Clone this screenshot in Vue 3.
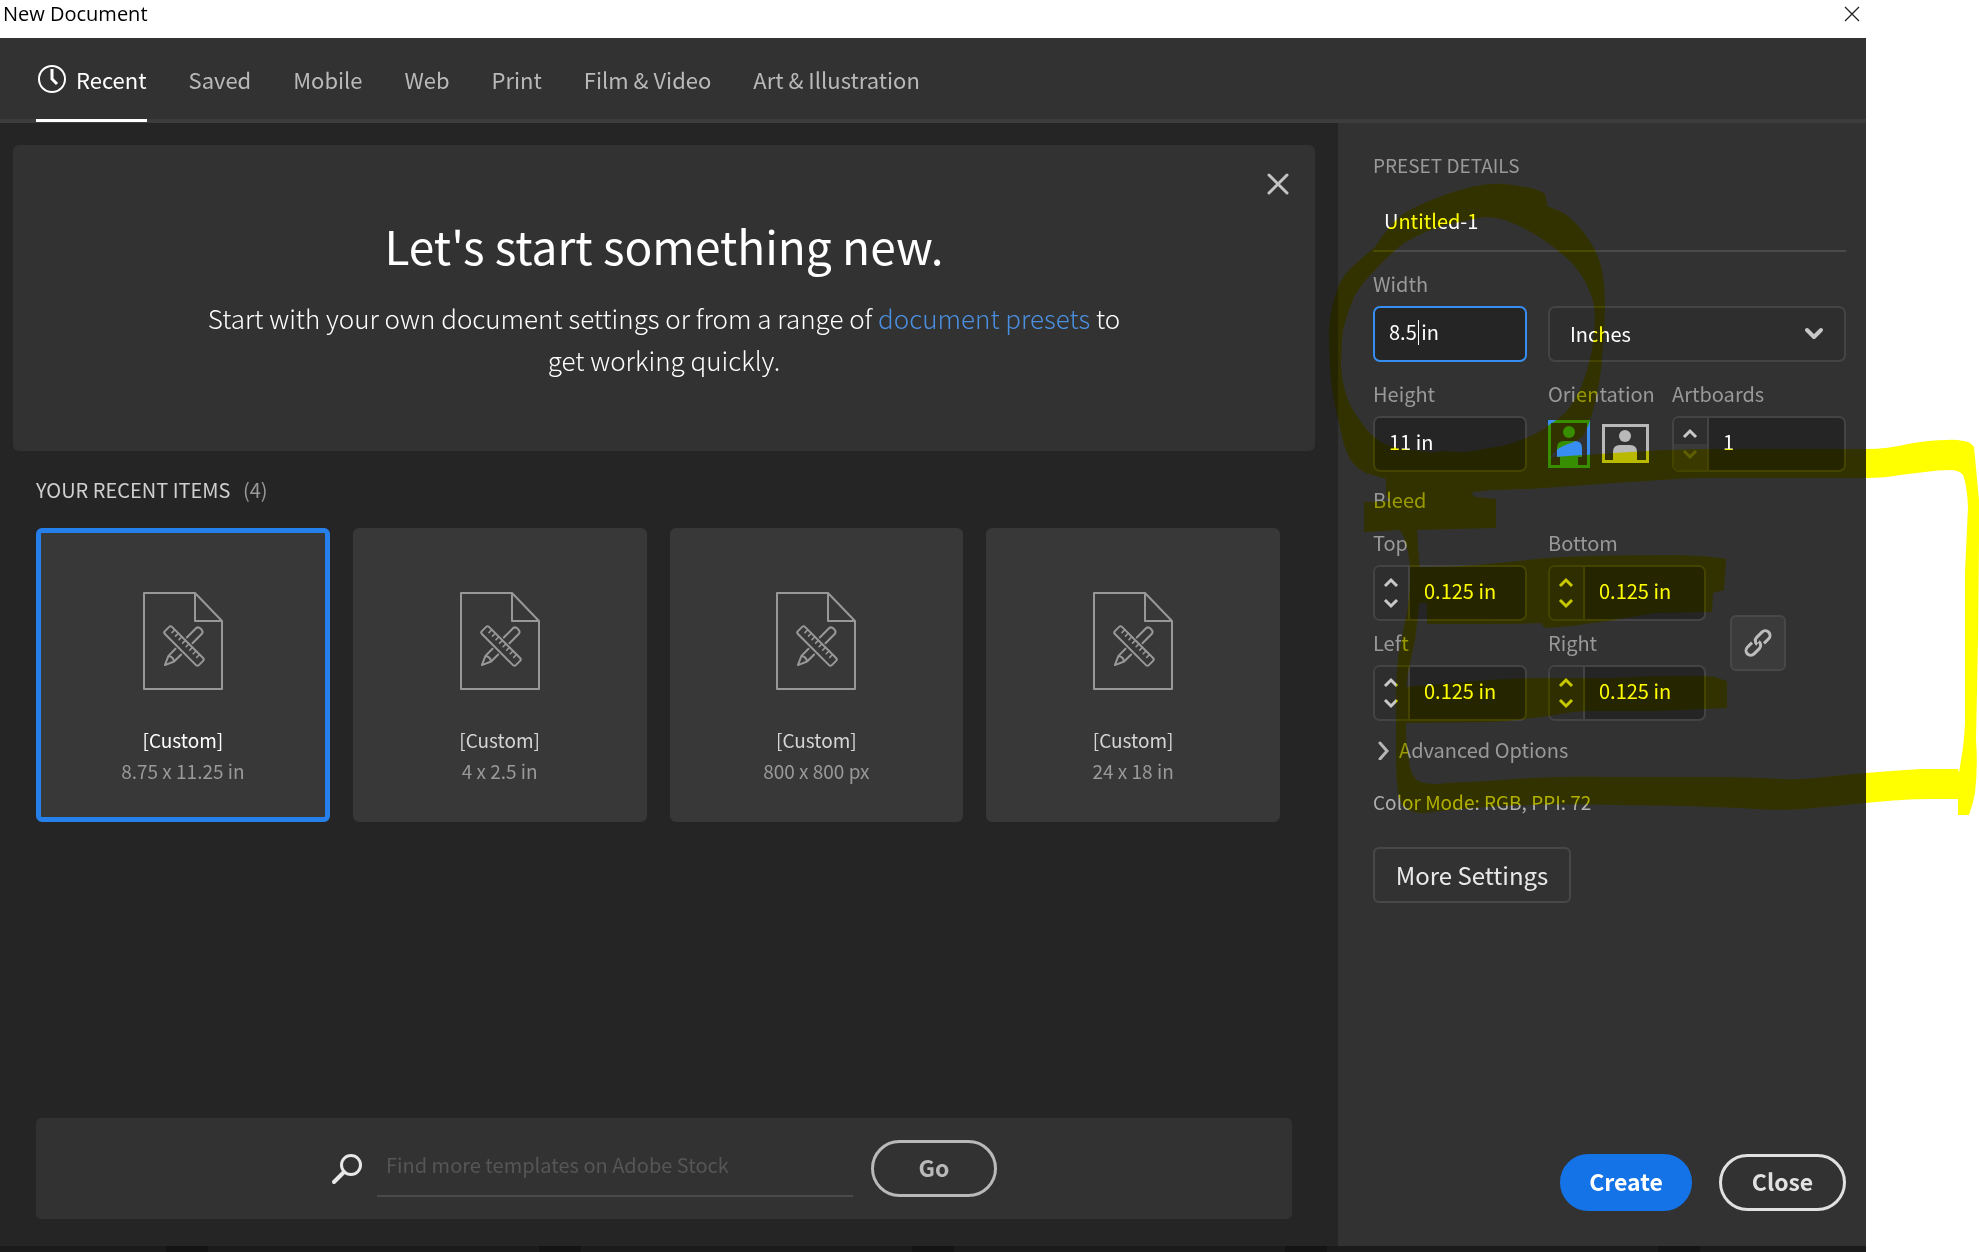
<script setup>
import { ref } from 'vue'

const tabs = ['Recent', 'Saved', 'Mobile', 'Web', 'Print', 'Film & Video', 'Art & Illustration']
const activeTab = ref('Recent')

const recents = [
  { id: 1, name: '[Custom]', size: '8.75 x 11.25 in' },
  { id: 2, name: '[Custom]', size: '4 x 2.5 in' },
  { id: 3, name: '[Custom]', size: '800 x 800 px' },
  { id: 4, name: '[Custom]', size: '24 x 18 in' }
]
const selected = ref(1)

const docName = ref('Untitled-1')
const width = ref('8.5 in')
const height = ref('11 in')
const units = ref('Inches')
const artboards = ref('1')
const bleed = ref([
  { key: 'top', label: 'Top', value: '0.125 in' },
  { key: 'bottom', label: 'Bottom', value: '0.125 in' },
  { key: 'left', label: 'Left', value: '0.125 in' },
  { key: 'right', label: 'Right', value: '0.125 in' }
])
</script>

<template>
  <div class="page">
    <header class="titlebar">
      <span>New Document</span>
      <button class="plain" aria-label="Close window">
        <svg width="16" height="16" viewBox="0 0 16 16"><path d="M1 1l14 14M15 1L1 15" stroke="#222" stroke-width="1.3" /></svg>
      </button>
    </header>

    <nav class="tabs">
      <button v-for="t in tabs" :key="t" class="tab" :class="{ active: t === activeTab }" @click="activeTab = t">
        <svg v-if="t === 'Recent'" width="30" height="30" viewBox="0 0 30 30" fill="none" stroke="#fff">
          <circle cx="16" cy="15" r="13" stroke-width="2" />
          <path d="M16 5v10l5 5" stroke-width="3" />
        </svg>
        {{ t }}
      </button>
    </nav>

    <div class="body">
      <main class="main">
        <section class="banner">
          <button class="plain dismiss" aria-label="Dismiss">
            <svg width="22" height="22" viewBox="0 0 22 22"><path d="M2 2l18 18M20 2L2 20" stroke="#c4c4c4" stroke-width="3" stroke-linecap="round" /></svg>
          </button>
          <h1>Let's start something new.</h1>
          <p>Start with your own document settings or from a range of <a href="#">document presets</a> to get working quickly.</p>
        </section>

        <section class="recents">
          <h2>YOUR RECENT ITEMS <span>(4)</span></h2>
          <div class="grid">
            <button v-for="r in recents" :key="r.id" class="card" :class="{ selected: r.id === selected }" @click="selected = r.id">
              <svg class="doc" width="82" height="100" viewBox="0 0 82 100" fill="none" stroke="#989898" stroke-width="2" stroke-linejoin="round" stroke-linecap="round">
                <path d="M2 2h51l27 28v68H2zM53 2v28h27" />
                <g transform="translate(42 55) rotate(-45)">
                  <rect x="-5" y="-24" width="10" height="48" rx="2" />
                  <path d="M5 -18h-4M5 -13h-4M5 -8h-4M5 -3h-4M5 2h-4M5 7h-4M5 12h-4M5 17h-4" stroke-width="1.6" />
                </g>
                <g transform="translate(42 55) rotate(45)">
                  <path d="M-4 -8v-13q0-3 4-3t4 3v13M-4 8v10l4 9 4-9V8M-4 18q4-3 8 0" />
                </g>
              </svg>
              <span class="card-name">{{ r.name }}</span>
              <span class="card-size">{{ r.size }}</span>
            </button>
          </div>
        </section>

        <form class="search" @submit.prevent>
          <svg width="32" height="32" viewBox="0 0 32 32" fill="none" stroke="#e8e8e8" stroke-linecap="round">
            <circle cx="20" cy="12" r="9.5" stroke-width="3" />
            <path d="M13 19L3 29" stroke-width="4" />
          </svg>
          <input type="text" aria-label="Find templates" placeholder="Find more templates on Adobe Stock" />
          <button class="pill go">Go</button>
        </form>
      </main>

      <aside class="panel">
        <h3>PRESET DETAILS</h3>
        <input v-model="docName" class="name" type="text" aria-label="Document name" />

        <div class="row first">
          <div class="field col-a">
            <label for="w">Width</label>
            <div class="box focused">
              <input id="w" v-model="width" type="text" />
              <i class="caret"></i>
            </div>
          </div>
          <div class="field grow">
            <label for="u" class="ghost">Units</label>
            <div class="box select">
              <select id="u" v-model="units">
                <option>Inches</option>
                <option>Pixels</option>
                <option>Points</option>
              </select>
              <svg width="20" height="14" viewBox="0 0 20 14" fill="none"><path d="M3 3l7 7 7-7" stroke="#c8c8c8" stroke-width="4" stroke-linecap="round" stroke-linejoin="round" /></svg>
            </div>
          </div>
        </div>

        <div class="row">
          <div class="field col-a">
            <label for="h">Height</label>
            <div class="box"><input id="h" v-model="height" type="text" /></div>
          </div>
          <div class="field col-o">
            <span class="label">Orientation</span>
            <div class="orient">
              <button class="plain" aria-label="Portrait">
                <svg width="42" height="48" viewBox="0 0 42 48">
                  <rect x="1.5" y="1.5" width="39" height="45" fill="none" stroke="#378ef0" stroke-width="3" />
                  <circle cx="21" cy="12" r="6" fill="#378ef0" />
                  <path d="M9 37V28q0-7 7-7h11q7 0 7 7v9h-4v9H12v-9z" fill="#378ef0" />
                </svg>
              </button>
              <button class="plain" aria-label="Landscape">
                <svg width="48" height="40" viewBox="0 0 48 40">
                  <rect x="1.5" y="1.5" width="44" height="36" fill="none" stroke="#b9b9b9" stroke-width="3" />
                  <circle cx="23" cy="12" r="6" fill="#b9b9b9" />
                  <path d="M11 38V28q0-7 7-7h10q7 0 7 7v10z" fill="#b9b9b9" />
                </svg>
              </button>
            </div>
          </div>
          <div class="field grow">
            <label for="ab">Artboards</label>
            <div class="box stepper">
              <div class="arrows">
                <button aria-label="More artboards"><svg width="16" height="11" viewBox="0 0 16 11"><path d="M2 9l6-6 6 6" /></svg></button>
                <button class="off" disabled aria-label="Fewer artboards"><svg width="16" height="11" viewBox="0 0 16 11"><path d="M2 2l6 6 6-6" /></svg></button>
              </div>
              <input id="ab" v-model="artboards" type="text" />
            </div>
          </div>
        </div>

        <span class="label bleed-title">Bleed</span>
        <div class="bleed">
          <div class="bleed-grid">
            <div v-for="b in bleed" :key="b.key" class="field">
              <label :for="b.key">{{ b.label }}</label>
              <div class="box stepper">
                <div class="arrows">
                  <button :aria-label="'Increase ' + b.label"><svg width="16" height="11" viewBox="0 0 16 11"><path d="M2 9l6-6 6 6" /></svg></button>
                  <button :aria-label="'Decrease ' + b.label"><svg width="16" height="11" viewBox="0 0 16 11"><path d="M2 2l6 6 6-6" /></svg></button>
                </div>
                <input :id="b.key" v-model="b.value" type="text" />
              </div>
            </div>
          </div>
          <button class="link" aria-label="Link bleed values">
            <svg width="32" height="32" viewBox="0 0 32 32" fill="none" stroke="#bdbdbd" stroke-width="3" stroke-linecap="butt">
              <g transform="translate(16 16) rotate(-45)">
                <path d="M-4 -4.500h-6.500a4.700 4.700 0 0 0 0 9.400h7.500a4.700 4.700 0 0 0 4.600 -5.500" />
                <path d="M4 4.500h6.500a4.700 4.700 0 0 0 0 -9.400h-7.500a4.700 4.700 0 0 0 -4.600 5.500" />
              </g>
            </svg>
          </button>
        </div>

        <button class="plain advanced">
          <svg width="12" height="20" viewBox="0 0 12 20" fill="none"><path d="M3 3l7 8-7 8" stroke="#b5b5b5" stroke-width="3" stroke-linecap="round" /></svg>
          Advanced Options
        </button>
        <p class="mode">Color Mode: RGB, PPI: 72</p>
        <button class="more">More Settings</button>

        <div class="actions">
          <button class="pill create">Create</button>
          <button class="pill close">Close</button>
        </div>
      </aside>
    </div>

    <footer class="edge"><i></i><i></i><i></i><i></i><i></i></footer>

    <!-- Yellow marker strokes drawn over the preset details -->
    <svg class="marker" width="659" height="840" viewBox="1320 0 659 840" fill="#ff0" aria-hidden="true">
      <path fill-rule="evenodd" d="M1547 202L1545 194Q1538 188 1505 184Q1488 183 1471 187Q1438 195 1404 213Q1388 226 1375 247Q1355 264 1349 270Q1340 280 1337 290Q1330 310 1329 330Q1329 360 1331 380Q1334 405 1339 423Q1343 445 1349 457Q1355 468 1366 473L1386 479L1540 470L1551 456Q1558 447 1568 444Q1577 441 1583 436Q1590 424 1593 410Q1598 392 1601 370Q1605 325 1605 303Q1605 286 1602 270Q1598 253 1589 240Q1578 223 1564 213L1547 206ZM1484 217Q1495 217 1505 220Q1522 226 1539 237Q1558 249 1572 263Q1584 277 1589 290Q1595 303 1595 317Q1595 334 1592 350Q1588 369 1582 385Q1576 400 1566 412Q1558 420 1549 425Q1539 433 1526 438Q1508 446 1488 448Q1467 453 1446 453Q1430 453 1412 450Q1395 449 1383 443Q1369 435 1362 423Q1352 411 1347 397Q1341 380 1341 363Q1341 347 1343 330Q1347 313 1354 297Q1362 283 1375 270Q1389 255 1404 243Q1424 231 1446 225Z" />
      <path fill-rule="evenodd" d="M1386 474L1386 494L1390 501L1364 502V532L1400 530Q1404 536 1406 543Q1410 558 1410 573Q1410 590 1408 607L1404 627L1398 657Q1396 680 1396 700V757Q1396 776 1398 793Q1400 804 1406 808Q1414 814 1424 813Q1456 809 1488 807Q1550 803 1614 805Q1677 805 1740 808Q1780 811 1803 809L1866 803Q1905 799 1930 799H1958V815H1969Q1973 804 1975 793Q1978 766 1976 740L1978 640L1979 540V500L1974 447Q1970 441 1963 441Q1955 439 1946 440Q1930 440 1908 444Q1888 449 1866 449Q1824 449 1782 449L1698 449Q1655 450 1614 453Q1570 456 1549 457L1440 451ZM1471 493Q1480 490 1530 489L1614 483L1677 479Q1710 477 1740 478H1866Q1885 478 1900 475L1925 472Q1938 470 1950 470Q1959 470 1963 475Q1967 485 1968 507L1965 573V723Q1964 745 1961 760L1959 773L1958 769H1921Q1890 771 1866 773L1824 777Q1800 780 1782 779Q1750 777 1719 777H1614Q1570 776 1530 778L1488 781L1446 783Q1435 785 1425 783Q1417 782 1414 777Q1409 768 1409 760Q1405 740 1406 720Q1404 700 1408 673L1415 640L1419 607Q1421 580 1419 560L1417 530L1496 528V499L1475 497Z" />
      <path d="M1415 567Q1460 567 1488 564L1547 558Q1590 555 1677 555Q1710 556 1726 559L1724 590L1713 593L1712 612L1656 613Q1635 616 1614 620L1572 626L1545 628L1541 623Q1515 624 1427 624V603H1414Z" />
      <path d="M1405 687L1475 681Q1510 678 1547 678H1614Q1650 676 1677 676Q1700 675 1715 677L1727 681V708L1656 711H1593Q1572 711 1555 715Q1515 721 1488 722L1404 723Z" />
    </svg>
  </div>
</template>

<style>
body {
  margin: 0;
  background: #fff;
}
</style>

<style scoped>
* {
  box-sizing: border-box;
}
.page {
  position: relative;
  display: flex;
  flex-direction: column;
  min-height: 100vh;
  padding-right: 113px;
  background: #fff;
  font-family: "Noto Sans CJK SC", "Noto Sans", sans-serif;
  font-size: 20px;
  line-height: 28px;
  color: #fff;
}
button,
input,
select {
  font: inherit;
  color: inherit;
  margin: 0;
}
button {
  cursor: pointer;
}
svg {
  display: block;
  flex: none;
}
.plain {
  border: 0;
  padding: 0;
  background: none;
}
.titlebar {
  display: flex;
  align-items: center;
  justify-content: space-between;
  height: 38px;
  padding: 0 6px 11px 3px;
  color: #000;
  font-family: "Open Sans", sans-serif;
}
.tabs {
  display: flex;
  gap: 42px;
  height: 85px;
  padding-left: 36px;
  background: #323232;
  border-bottom: 4px solid #3d3d3d;
}
.tab {
  display: flex;
  align-items: center;
  gap: 10px;
  height: 84px;
  padding: 0;
  border: 0;
  border-bottom: 3px solid transparent;
  background: none;
  color: #b9b9b9;
  font-size: 22px;
}
.tab.active {
  color: #fff;
  border-color: #fff;
}
.body {
  display: flex;
  flex: 1;
}
.main {
  flex: 1;
  display: flex;
  flex-direction: column;
  padding: 22px 23px 27px 13px;
  background: #252525;
}
.banner {
  position: relative;
  min-height: 306px;
  padding: 68px 180px 0;
  border-radius: 6px;
  background: #323232;
  text-align: center;
}
.dismiss {
  position: absolute;
  top: 28px;
  right: 26px;
}
h1 {
  margin: 0;
  font-size: 46px;
  line-height: 64px;
  font-weight: 400;
}
.banner p {
  margin: 20px 0 0;
  font-size: 26px;
  line-height: 42px;
  font-weight: 300;
}
.banner a {
  color: #4b8fe0;
  text-decoration: none;
}
.recents {
  padding: 24px 35px 0 23px;
}
h2 {
  margin: 0;
  font-size: 20px;
  line-height: 30px;
  font-weight: 400;
  color: #cfcfcf;
}
h2 span {
  margin-left: 8px;
  color: #999;
}
.grid {
  display: grid;
  grid-template-columns: repeat(4, 1fr);
  gap: 23px;
  margin-top: 23px;
}
.card {
  display: flex;
  flex-direction: column;
  align-items: center;
  height: 294px;
  padding: 58px 0 0;
  border: 5px solid #383838;
  border-radius: 6px;
  background: #383838;
  font-size: 19px;
}
.card.selected {
  border-color: #2680eb;
}
.card-name {
  margin-top: 35px;
  color: #d6d6d6;
}
.selected .card-name {
  color: #fff;
}
.card-size {
  margin-top: 3px;
  color: #999;
}
.search {
  display: flex;
  align-items: center;
  justify-content: center;
  height: 101px;
  margin: auto 23px 0;
  border-radius: 5px;
  background: #323232;
}
.search input {
  width: 476px;
  height: 56px;
  margin: 0 18px 0 14px;
  padding: 0 9px 6px;
  border: 0;
  border-bottom: 2px solid #4a4a4a;
  background: none;
  font-size: 20px;
}
.search input::placeholder {
  color: #565656;
  opacity: 1;
}
.pill {
  height: 57px;
  padding: 0 0 4px;
  border: 3px solid;
  border-radius: 29px;
  background: none;
  font-size: 23px;
  font-weight: 700;
}
.go {
  width: 126px;
  color: #b9b9b9;
}
.panel {
  display: flex;
  flex-direction: column;
  align-items: flex-start;
  width: 528px;
  padding: 27px 20px 35px 35px;
  background: #323232;
  color: #fff;
}
h3,
label,
.label,
.mode {
  margin: 0;
  font-size: 20px;
  line-height: 30px;
  font-weight: 400;
  color: #999;
}
h3,
.mode {
  font-size: 19px;
}
.name {
  width: 100%;
  height: 62px;
  margin-top: 10px;
  padding: 0 11px;
  border: 0;
  border-bottom: 2px solid #4a4a4a;
  background: none;
}
.row {
  display: flex;
  width: 100%;
  margin-top: 17px;
}
.field {
  display: flex;
  flex-direction: column;
  gap: 7px;
}
.col-a {
  width: 154px;
  margin-right: 21px;
}
.col-o {
  width: 124px;
}
.grow {
  flex: 1;
}
.ghost {
  visibility: hidden;
}
.box {
  position: relative;
  display: flex;
  align-items: center;
  height: 56px;
  border: 2px solid #444;
  border-radius: 7px;
  background: #252525;
  overflow: hidden;
}
.box input {
  flex: 1;
  width: 100%;
  min-width: 0;
  height: 52px;
  padding: 0 0 6px 14px;
  border: 0;
  background: none;
  outline: 0;
}
.focused {
  border-color: #378ef0;
}
.caret {
  position: absolute;
  top: 12px;
  left: 43px;
  width: 1px;
  height: 25px;
  background: #fff;
}
.select {
  background: #2e2e2e;
}
.select select {
  flex: 1;
  height: 52px;
  padding: 0 0 0 20px;
  border: 0;
  background: none;
  appearance: none;
}
.select svg {
  position: absolute;
  right: 20px;
  pointer-events: none;
}
.orient {
  display: flex;
  align-items: center;
  gap: 12px;
  height: 56px;
}
.arrows {
  display: flex;
  flex-direction: column;
  width: 35px;
  height: 52px;
  flex: none;
  border-right: 2px solid #444;
  background: #2e2e2e;
}
.arrows button {
  display: flex;
  align-items: flex-end;
  justify-content: center;
  flex: 1;
  padding: 0 2px 5px 0;
  border: 0;
  background: none;
}
.arrows button:last-child {
  align-items: flex-start;
  padding: 5px 2px 0 0;
}
.arrows svg {
  fill: none;
  stroke: #c8c8c8;
  stroke-width: 3;
}
.arrows .off {
  background: #3a3a3a;
}
.off svg {
  stroke: #606060;
}
.bleed-title {
  margin-top: 13px;
}
.bleed {
  display: flex;
  align-items: center;
  margin-top: 13px;
}
.bleed-grid {
  display: grid;
  grid-template-columns: 154px 158px;
  gap: 7px 21px;
}
.link {
  display: flex;
  align-items: center;
  justify-content: center;
  width: 56px;
  height: 56px;
  margin: 36px 0 0 24px;
  padding: 0;
  border: 2px solid #484848;
  border-radius: 6px;
  background: #3b3b3b;
}
.advanced {
  display: flex;
  align-items: center;
  gap: 10px;
  margin-top: 15px;
  padding-left: 4px;
  color: #999;
  font-size: 20px;
}
.mode {
  margin-top: 23px;
  color: #b0b0b0;
}
.more {
  width: 198px;
  height: 56px;
  margin-top: 30px;
  padding: 0;
  border: 2px solid #484848;
  border-radius: 6px;
  background: none;
  font-size: 24px;
  color: #e8e8e8;
}
.actions {
  display: flex;
  justify-content: flex-end;
  gap: 27px;
  width: 100%;
  margin-top: auto;
}
.create {
  width: 132px;
  border-color: #1473e6;
  background: #1473e6;
}
.close {
  width: 127px;
  color: #e1e1e1;
}
.edge {
  display: flex;
  justify-content: space-around;
  height: 6px;
  background: #1b1b1b;
}
.edge i {
  width: 42px;
  background: #141414;
}
.marker {
  position: absolute;
  top: 0;
  right: 0;
  mix-blend-mode: multiply;
  pointer-events: none;
}
</style>
